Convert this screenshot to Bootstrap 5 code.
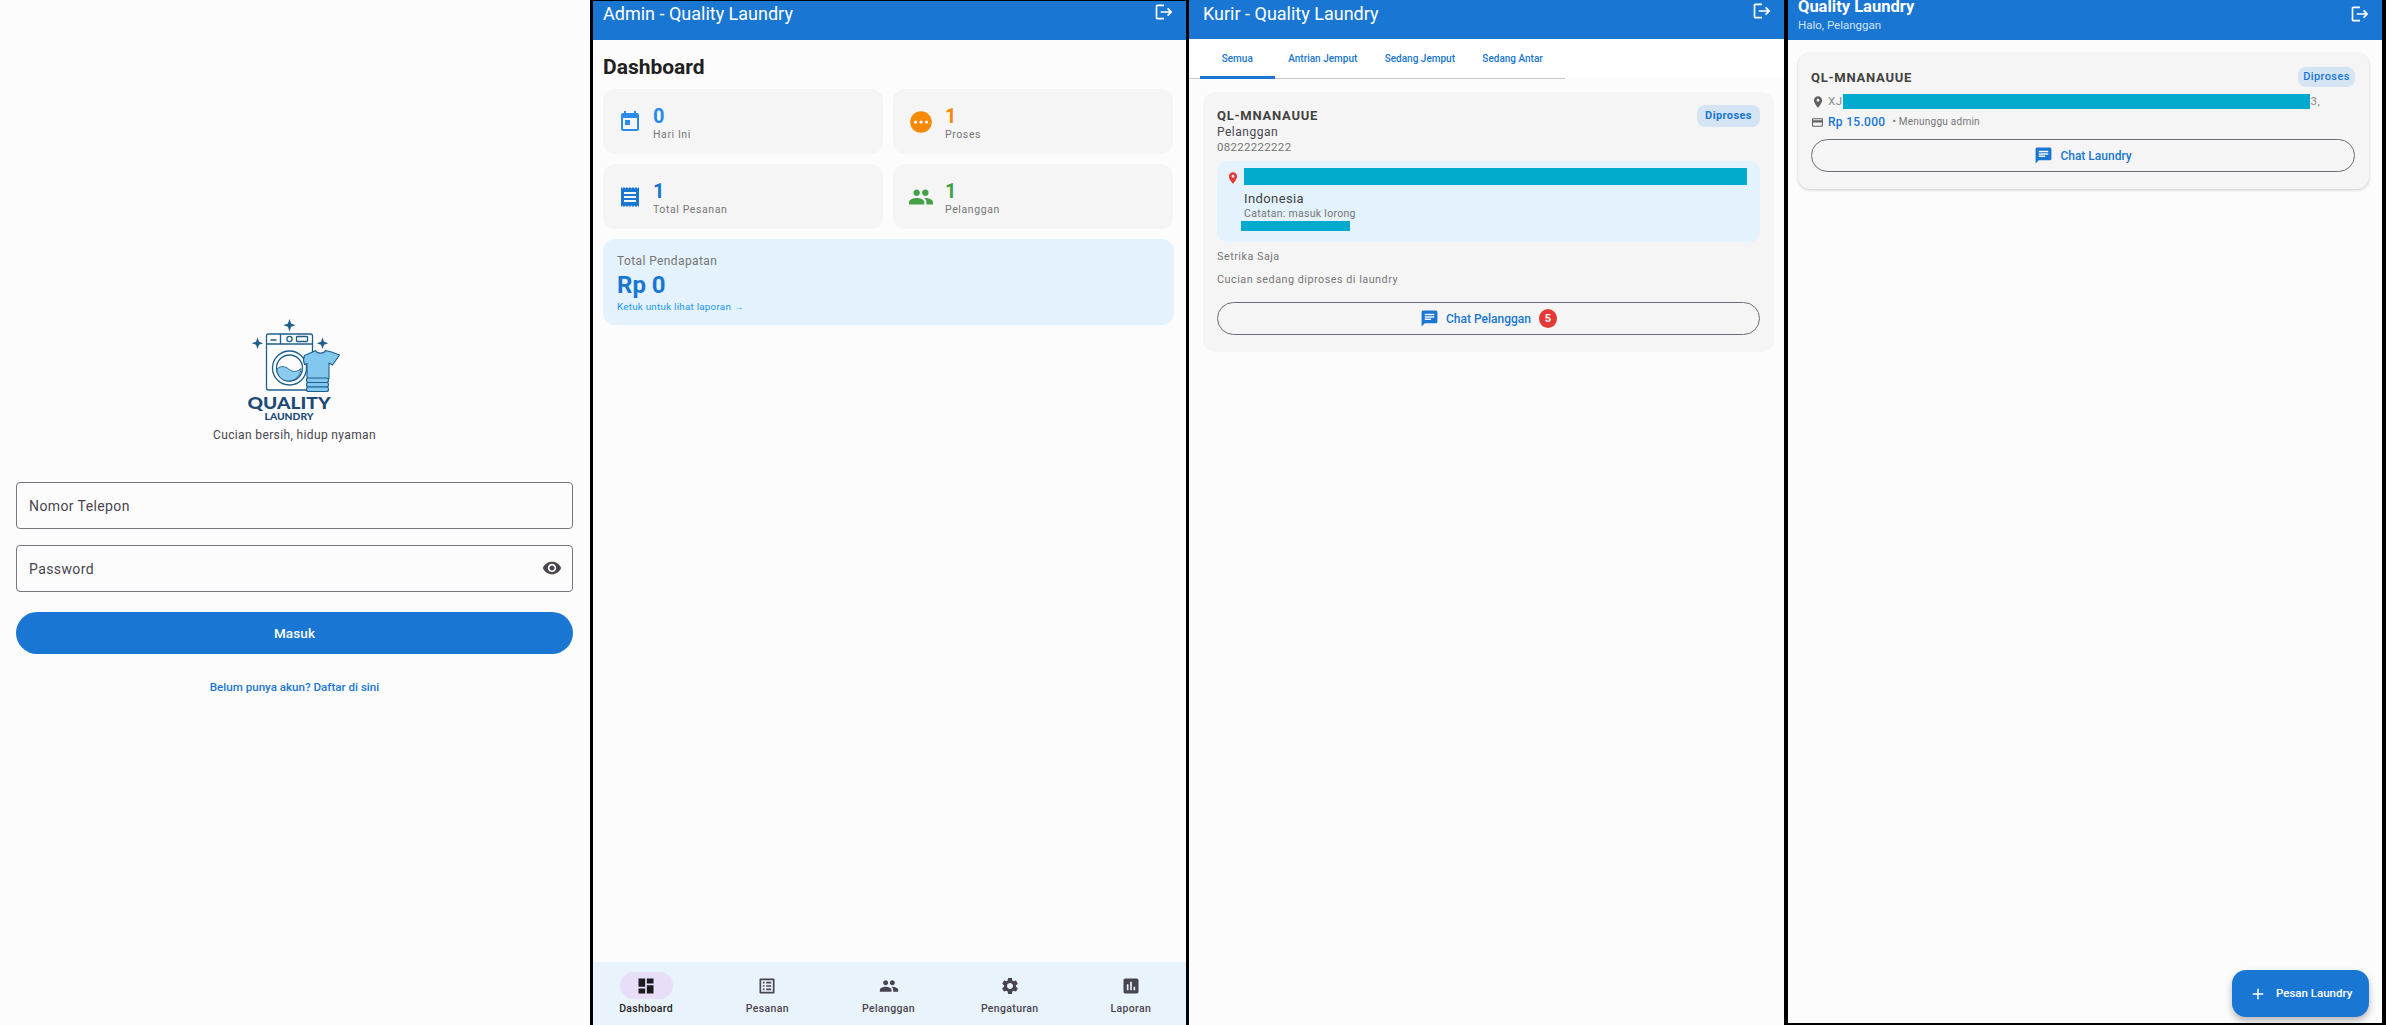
<!DOCTYPE html>
<html lang="en">
<head>
  <meta charset="UTF-8">
  <meta name="viewport" content="width=device-width, initial-scale=1.0">
  <title>Quality Laundry</title>
  <link href="https://cdn.jsdelivr.net/npm/bootstrap@5.3.0/dist/css/bootstrap.min.css" rel="stylesheet">
  <style>
    html, body { height: 100%; overflow: hidden; }
    body { font-family: Roboto, "Liberation Sans", sans-serif; background: #000; color: #212121; }
    svg.ic { fill: currentColor; flex: none; display: block; }

    /* four phone screens side by side */
    .shell { height: 1025px; background: #000; gap: 3px; }
    .screen { background: #fcfcfc; position: relative; overflow: hidden; flex: none; display: flex; flex-direction: column; }
    .scr-login { width: 590px; padding: 318px 17px 0 16px; }
    .scr-admin { width: 593px; margin-top: 1px; height: 1024px; }
    .scr-kurir { width: 595px; margin-right: 1px; }
    .scr-user { width: 594px; height: 1023px; }

    /* login */
    .logo-wrap { width: 100px; margin: 0 auto; transform: translateX(-1.5px); }
    .logo-wrap svg { display: block; }
    .logo-word { font-family: Lato, sans-serif; font-weight: 900; fill: #1d4a76; }
    .tagline { font-size: 12px; letter-spacing: .37px; color: #49454f; text-align: center; line-height: 16px; margin-top: 5px; margin-bottom: 39px; }
    .login-input.form-control { height: 47px; border: 1px solid #79747e; border-radius: 4px; background: transparent; padding: 0 12px; font-size: 14px; letter-spacing: .4px; margin-bottom: 16px; box-shadow: none; }
    .login-input::placeholder { color: #49454f; opacity: 1; }
    .eye-btn { position: absolute; right: 11px; top: 13px; color: #49454f; }
    .btn-masuk.btn { display: block; width: 100%; height: 42px; margin-top: 20px; background: #1976d2; border: 0; color: #fff; font-size: 13.5px; font-weight: 500; letter-spacing: .1px; }
    .daftar-link { display: block; text-align: center; margin-top: 25px; font-size: 11.6px; font-weight: 500; color: #1976d2; text-decoration: none; line-height: 16px; }

    /* app bars */
    .appbar { background: #1976d2; color: #fff; height: 39px; padding: 0 12px 0 10px; flex: none; }
    .appbar-title { font-size: 18px; line-height: 24px; margin-top: 1px; }
    .scr-kurir .appbar { padding-left: 14px; }
    .scr-kurir .appbar-title { margin-top: 2px; }
    .scr-kurir .appbar svg, .scr-admin .appbar svg { margin-top: 1px; }
    .scr-user .appbar { height: 40px; padding-left: 10px; padding-right: 12px; align-items: stretch; overflow: hidden; }
    .user-bar-text { display: flex; flex-direction: column; justify-content: flex-end; padding-bottom: 8px; }
    .user-title { font-size: 16.5px; font-weight: 700; line-height: 20px; }
    .user-sub { font-size: 11.5px; line-height: 14px; color: #cfe3f6; margin-top: 1px; }

    /* admin */
    .admin-body { padding: 0 12px 0 10px; flex: 1; }
    .dash-title { font-size: 21px; font-weight: 700; line-height: 28px; margin: 13px 0 8px; color: #212121; }
    .stat-grid { display: grid; grid-template-columns: 280px 280px; gap: 10px; }
    .stat-box { height: 65px; background: #f5f5f5; border-radius: 12px; padding-left: 15px; display: flex; align-items: center; gap: 11px; }
    .stat-text { padding-top: 3px; }
    .stat-num { font-size: 20px; font-weight: 700; line-height: 24px; }
    .stat-lbl { font-size: 10.5px; letter-spacing: .6px; color: #757575; line-height: 14px; }
    .c-today { color: #2a8ce8; }
    .c-proses { color: #f58a07; }
    .c-total { color: #1976d2; }
    .c-cust { color: #43a047; }
    .income-box { background: #e3f2fd; border-radius: 12px; height: 86px; margin-top: 10px; padding: 14px 14px; }
    .income-lbl { font-size: 12px; letter-spacing: .4px; color: #757575; line-height: 16px; }
    .income-val { font-size: 24px; font-weight: 700; color: #1976d2; line-height: 30px; margin-top: 1px; }
    .income-hint { font-size: 9.8px; letter-spacing: .25px; color: #2196f3; line-height: 14px; }

    .bottom-bar { height: 63px; background: #e9f3fc; gap: 21.200px; flex: none; padding-right: 2px; }
    .bar-item { width: 100px; display: flex; flex-direction: column; align-items: center; color: #49454f; padding-top: 10px; }
    .bar-pill { width: 53px; height: 27px; border-radius: 14px; display: flex; align-items: center; justify-content: center; }
    .bar-item.is-on { color: #1d1b20; }
    .bar-item.is-on .bar-pill { background: #e8def8; }
    .bar-lbl { font-size: 10.5px; font-weight: 500; letter-spacing: .35px; line-height: 14px; margin-top: 3px; }

    /* kurir */
    .tab-band { background: #fff; height: 40px; flex: none; }
    .tab-strip { width: 376px; height: 40px; border-bottom: 1px solid #cac4d0; padding-left: 11px; flex-wrap: nowrap; }
    .tab-strip .nav-link { height: 40px; padding: 0 13.7px; font-size: 10px; font-weight: 500; color: #1976d2; line-height: 40px; white-space: nowrap; margin-bottom: -1px; border-bottom: 3px solid transparent; }
    .tab-strip .nav-link.active { min-width: 74.5px; text-align: center; border-bottom-color: #1976d2; }
    .order-box { background: #f5f5f5; border: 0; border-radius: 12px; }
    .kurir-order { margin: 13px 10px 0 14px; height: 260px; padding: 13px 14px 0; }
    .user-order { margin: 13px 13px 0 10px; height: 136px; padding: 14px 14px 0 13px; box-shadow: 0 1px 3px rgba(0,0,0,.2); }
    .order-code { font-size: 13px; font-weight: 700; letter-spacing: .75px; color: #424242; line-height: 20px; }
    .user-order .order-code { padding-top: 1px; }
    .status-chip.badge { background: #d5e4f3; color: #1976d2; font-size: 11px; font-weight: 700; letter-spacing: .4px; border-radius: 8px; padding: 0; height: 22px; width: 63px; line-height: 22px; }
    .user-order .status-chip.badge { width: 57px; height: 20px; line-height: 20px; font-weight: 500; }
    .cust-name { font-size: 12px; letter-spacing: .5px; color: #49454f; line-height: 16px; margin-top: -3px; }
    .cust-phone { font-size: 11.5px; letter-spacing: .3px; color: #757575; line-height: 15px; }
    .addr-box { background: #e3f2fd; border-radius: 10px; height: 81px; margin-top: 6px; padding: 7px 13px 0 9px; display: flex; gap: 4px; }
    .addr-pin { color: #e53935; margin-top: 3px; }
    .addr-text { flex: 1; min-width: 0; }
    .hidden-bar { background: #02abce; display: block; }
    .bar-a { height: 17px; width: 503px; }
    .addr-country { font-size: 13px; letter-spacing: .4px; color: #424242; line-height: 16px; margin-top: 6px; }
    .addr-note { font-size: 10.5px; letter-spacing: .3px; color: #757575; line-height: 14px; }
    .bar-b { height: 10px; width: 109px; margin-left: -3px; }
    .small-line { font-size: 10.8px; letter-spacing: .5px; color: #757575; line-height: 14px; }
    .line-setrika { margin-top: 8px; }
    .line-status { margin-top: 9px; }
    .chat-btn.btn { display: flex; align-items: center; justify-content: center; gap: 7px; height: 33px; width: 100%; padding: 0; border: 1px solid #6f6b75; background: transparent; color: #1976d2; font-size: 12px; font-weight: 500; }
    .kurir-order .chat-btn.btn { margin-top: 15px; }
    .unread-dot { width: 18px; height: 19px; border-radius: 50%; background: #e53935; color: #fff; font-size: 11px; font-weight: 700; line-height: 19px; text-align: center; margin-left: 1px; }

    /* pelanggan */
    .addr-line { font-size: 11.5px; letter-spacing: .5px; color: #8a8a8a; line-height: 15px; height: 15px; margin-top: 6px; }
    .user-pin { color: #616161; margin: 0 3.500px 0 -.5px; }
    .pay-icon { color: #616161; margin-right: 4px; }
    .bar-c { width: 467px; height: 15px; margin: 0 1px 0 0; }
    .price-line { line-height: 16px; margin-top: 5px; }
    .price-val { font-size: 12px; font-weight: 500; letter-spacing: .3px; color: #1976d2; }
    .price-note { font-size: 10px; letter-spacing: .25px; color: #757575; margin-left: 7px; }
    .user-order .chat-btn.btn { margin-top: 9px; }
    .fab-pesan.btn { position: absolute; left: 444px; top: 970px; width: 137px; height: 47px; border: 0; border-radius: 14px; background: #1976d2; color: #fff; font-size: 11.5px; font-weight: 500; padding: 0 0 0 17px; display: flex; align-items: center; gap: 9px; white-space: nowrap; box-shadow: 0 4px 7px rgba(0,0,0,.28); }
  </style>
</head>
<body>
  <!-- icon sheet -->
  <svg width="0" height="0" class="position-absolute">
    <symbol id="i-logout" viewBox="0 0 24 24"><path d="M17 7l-1.41 1.41L18.17 11H8v2h10.17l-2.58 2.58L17 17l5-5zM4 5h8V3H4c-1.1 0-2 .9-2 2v14c0 1.1.9 2 2 2h8v-2H4V5z"/></symbol>
    <symbol id="i-eye" viewBox="0 0 24 24"><path d="M12 4.5C7 4.5 2.73 7.61 1 12c1.73 4.39 6 7.5 11 7.5s9.27-3.11 11-7.5c-1.73-4.39-6-7.5-11-7.5zM12 17c-2.76 0-5-2.24-5-5s2.24-5 5-5 5 2.24 5 5-2.24 5-5 5zm0-8c-1.66 0-3 1.34-3 3s1.34 3 3 3 3-1.34 3-3-1.34-3-3-3z"/></symbol>
    <symbol id="i-today" viewBox="0 0 24 24"><path d="M19 3h-1V1h-2v2H8V1H6v2H5c-1.11 0-1.99.9-1.99 2L3 19c0 1.1.89 2 2 2h14c1.1 0 2-.9 2-2V5c0-1.1-.9-2-2-2zm0 16H5V8h14v11zM7 10h5v5H7z"/></symbol>
    <symbol id="i-pending" viewBox="0 0 24 24"><path d="M12 2C6.48 2 2 6.48 2 12s4.48 10 10 10 10-4.48 10-10S17.52 2 12 2zM7 13.5c-.83 0-1.5-.67-1.5-1.5s.67-1.5 1.5-1.5 1.5.67 1.5 1.5-.67 1.5-1.5 1.5zm5 0c-.83 0-1.5-.67-1.5-1.5s.67-1.5 1.5-1.5 1.5.67 1.5 1.5-.67 1.5-1.5 1.5zm5 0c-.83 0-1.5-.67-1.5-1.5s.67-1.5 1.5-1.5 1.5.67 1.5 1.5-.67 1.5-1.5 1.5z"/></symbol>
    <symbol id="i-receipt" viewBox="0 0 24 24"><path d="M18 17H6v-2h12v2zm0-4H6v-2h12v2zm0-4H6V7h12v2zM3 22l1.5-1.5L6 22l1.5-1.5L9 22l1.5-1.5L12 22l1.5-1.5L15 22l1.5-1.5L18 22l1.5-1.5L21 22V2l-1.5 1.5L18 2l-1.5 1.5L15 2l-1.5 1.5L12 2l-1.5 1.5L9 2 7.5 3.5 6 2 4.5 3.5 3 2v20z"/></symbol>
    <symbol id="i-people" viewBox="0 0 24 24"><path d="M16 11c1.66 0 2.99-1.34 2.99-3S17.66 5 16 5c-1.66 0-3 1.34-3 3s1.34 3 3 3zm-8 0c1.66 0 2.99-1.34 2.99-3S9.66 5 8 5C6.34 5 5 6.34 5 8s1.34 3 3 3zm0 2c-2.33 0-7 1.17-7 3.5V19h14v-2.5c0-2.33-4.67-3.5-7-3.5zm8 0c-.29 0-.62.02-.97.05 1.16.84 1.97 1.97 1.97 3.45V19h6v-2.5c0-2.33-4.67-3.5-7-3.5z"/></symbol>
    <symbol id="i-dash" viewBox="0 0 24 24"><path d="M3 13h8V3H3v10zm0 8h8v-6H3v6zm10 0h8V11h-8v10zm0-18v6h8V3h-8z"/></symbol>
    <symbol id="i-list" viewBox="0 0 24 24"><path d="M19 5v14H5V5h14m1.1-2H3.9c-.5 0-.9.4-.9.9v16.2c0 .4.4.9.9.9h16.2c.4 0 .9-.5.9-.9V3.9c0-.5-.5-.9-.9-.9zM11 7h6v2h-6V7zm0 4h6v2h-6v-2zm0 4h6v2h-6zM7 7h2v2H7zm0 4h2v2H7zm0 4h2v2H7z"/></symbol>
    <symbol id="i-gear" viewBox="0 0 24 24"><path d="M19.14 12.94c.04-.3.06-.61.06-.94 0-.32-.02-.64-.07-.94l2.03-1.58c.18-.14.23-.41.12-.61l-1.92-3.32c-.12-.22-.37-.29-.59-.22l-2.39.96c-.5-.38-1.03-.7-1.62-.94l-.36-2.54c-.04-.24-.24-.41-.48-.41h-3.84c-.24 0-.43.17-.47.41l-.36 2.54c-.59.24-1.13.57-1.62.94l-2.39-.96c-.22-.08-.47 0-.59.22L2.74 8.87c-.12.21-.08.47.12.61l2.03 1.58c-.05.3-.09.63-.09.94s.02.64.07.94l-2.03 1.58c-.18.14-.23.41-.12.61l1.92 3.32c.12.22.37.29.59.22l2.39-.96c.5.38 1.03.7 1.62.94l.36 2.54c.05.24.24.41.48.41h3.84c.24 0 .44-.17.47-.41l.36-2.54c.59-.24 1.13-.56 1.62-.94l2.39.96c.22.08.47 0 .59-.22l1.92-3.32c.12-.22.07-.47-.12-.61l-2.01-1.58zM12 15.6c-1.98 0-3.6-1.62-3.6-3.6s1.62-3.6 3.6-3.6 3.6 1.62 3.6 3.6-1.62 3.6-3.6 3.6z"/></symbol>
    <symbol id="i-report" viewBox="0 0 24 24"><path d="M19 3H5c-1.1 0-2 .9-2 2v14c0 1.1.9 2 2 2h14c1.1 0 2-.9 2-2V5c0-1.1-.9-2-2-2zM9 17H7v-7h2v7zm4 0h-2V7h2v10zm4 0h-2v-4h2v4z"/></symbol>
    <symbol id="i-chat" viewBox="0 0 24 24"><path d="M20 2H4c-1.1 0-1.99.9-1.99 2L2 22l4-4h14c1.1 0 2-.9 2-2V4c0-1.1-.9-2-2-2zM6 9h12v2H6V9zm8 5H6v-2h8v2zm4-6H6V6h12v2z"/></symbol>
    <symbol id="i-pin" viewBox="0 0 24 24"><path d="M12 2C8.13 2 5 5.13 5 9c0 5.25 7 13 7 13s7-7.75 7-13c0-3.87-3.13-7-7-7zm0 9.5c-1.38 0-2.5-1.12-2.5-2.5s1.12-2.5 2.5-2.5 2.5 1.12 2.5 2.5-1.12 2.5-2.5 2.5z"/></symbol>
    <symbol id="i-pay" viewBox="0 0 24 24"><path d="M20 4H4c-1.11 0-1.99.89-1.99 2L2 18c0 1.11.89 2 2 2h16c1.11 0 2-.89 2-2V6c0-1.11-.89-2-2-2zm0 14H4v-6h16v6zm0-10H4V6h16v2z"/></symbol>
    <symbol id="i-add" viewBox="0 0 24 24"><path d="M19 13h-6v6h-2v-6H5v-2h6V5h2v6h6v2z"/></symbol>
  </svg>

  <div class="shell d-flex">

    <!-- Login -->
    <section class="screen scr-login">
      <div class="logo-wrap">
        <svg width="100" height="104" viewBox="0 0 100 104">
          <g fill="#1f5f8b">
            <path d="M46 1l1.6 4.6L52 7.2l-4.4 1.6L46 13.5l-1.6-4.7L40 7.2l4.4-1.6z"/>
            <path d="M14 19.500l1.500 4.200 4.200 1.500-4.200 1.500-1.500 4.300-1.500-4.300-4.200-1.500 4.200-1.500z"/>
            <path d="M79 19.500l1.500 4.200 4.200 1.500-4.200 1.500-1.500 4.300-1.500-4.300-4.200-1.500 4.200-1.500z"/>
          </g>
          <g fill="none" stroke="#1f5f8b" stroke-width="1.300">
            <rect x="23" y="16" width="46" height="56" rx="2" fill="#fcfcfc"/>
            <path d="M23 26h46M37 16v10"/>
            <circle cx="46" cy="21" r="2.600"/>
            <rect x="53" y="18.500" width="11" height="5" rx=".8"/>
            <path d="M27 22h6" stroke-width="1.600"/>
            <circle cx="46" cy="50" r="17" fill="#fcfcfc"/>
            <circle cx="46" cy="50" r="13"/>
          </g>
          <path d="M33.400 51c4-3.500 8-3 12 .2s8 3 12.100-.6c-.4 7-5.700 12.400-12.500 12.400-6.500 0-11.500-5.200-11.600-12z" fill="#8ccaef" stroke="#1f5f8b" stroke-width=".9"/>
          <path d="M69 34l-8 3.500c-1.300 3-1.300 6 0 9l2.500-1v15h22V45l3.500 2 7-10-8-3-6-1.500c-1.500 3.500-8.500 3.500-10 0z" fill="#82c7ee" stroke="#1f5f8b" stroke-width="1.100" stroke-linejoin="round"/>
          <g fill="#82c7ee" stroke="#1f5f8b" stroke-width="1.100">
            <rect x="63" y="60" width="22" height="4.500" rx="2"/>
            <rect x="63" y="64.500" width="22" height="4.500" rx="2"/>
            <rect x="63" y="69" width="22" height="4.500" rx="2"/>
          </g>
          <text class="logo-word" x="45.500" y="90.500" text-anchor="middle" font-size="16.500" textLength="83" lengthAdjust="spacingAndGlyphs">QUALITY</text>
          <text class="logo-word" x="45.500" y="101.500" text-anchor="middle" font-size="8.500" textLength="49" lengthAdjust="spacingAndGlyphs">LAUNDRY</text>
        </svg>
      </div>
      <p class="tagline">Cucian bersih, hidup nyaman</p>
      <form>
        <input type="text" class="form-control login-input" placeholder="Nomor Telepon">
        <div class="position-relative">
          <input type="password" class="form-control login-input" placeholder="Password">
          <svg class="ic eye-btn" width="20" height="20"><use href="#i-eye"/></svg>
        </div>
        <button type="button" class="btn btn-masuk rounded-pill">Masuk</button>
      </form>
      <a href="#" class="daftar-link">Belum punya akun? Daftar di sini</a>
    </section>

    <!-- Admin -->
    <section class="screen scr-admin">
      <header class="appbar d-flex justify-content-between align-items-start">
        <div class="appbar-title">Admin - Quality Laundry</div>
        <svg class="ic" width="20" height="20"><use href="#i-logout"/></svg>
      </header>
      <main class="admin-body">
        <h1 class="dash-title">Dashboard</h1>
        <div class="stat-grid">
          <div class="stat-box">
            <svg class="ic c-today" width="24" height="24"><use href="#i-today"/></svg>
            <div class="stat-text"><div class="stat-num c-today">0</div><div class="stat-lbl">Hari Ini</div></div>
          </div>
          <div class="stat-box">
            <svg class="ic c-proses" width="26" height="26"><use href="#i-pending"/></svg>
            <div class="stat-text"><div class="stat-num c-proses">1</div><div class="stat-lbl">Proses</div></div>
          </div>
          <div class="stat-box">
            <svg class="ic c-total" width="24" height="24"><use href="#i-receipt"/></svg>
            <div class="stat-text"><div class="stat-num c-total">1</div><div class="stat-lbl">Total Pesanan</div></div>
          </div>
          <div class="stat-box">
            <svg class="ic c-cust" width="26" height="26"><use href="#i-people"/></svg>
            <div class="stat-text"><div class="stat-num c-cust">1</div><div class="stat-lbl">Pelanggan</div></div>
          </div>
        </div>
        <div class="income-box">
          <div class="income-lbl">Total Pendapatan</div>
          <div class="income-val">Rp 0</div>
          <div class="income-hint">Ketuk untuk lihat laporan →</div>
        </div>
      </main>
      <nav class="bottom-bar d-flex justify-content-center">
        <div class="bar-item is-on"><span class="bar-pill"><svg class="ic" width="20" height="20"><use href="#i-dash"/></svg></span><span class="bar-lbl">Dashboard</span></div>
        <div class="bar-item"><span class="bar-pill"><svg class="ic" width="20" height="20"><use href="#i-list"/></svg></span><span class="bar-lbl">Pesanan</span></div>
        <div class="bar-item"><span class="bar-pill"><svg class="ic" width="20" height="20"><use href="#i-people"/></svg></span><span class="bar-lbl">Pelanggan</span></div>
        <div class="bar-item"><span class="bar-pill"><svg class="ic" width="20" height="20"><use href="#i-gear"/></svg></span><span class="bar-lbl">Pengaturan</span></div>
        <div class="bar-item"><span class="bar-pill"><svg class="ic" width="20" height="20"><use href="#i-report"/></svg></span><span class="bar-lbl">Laporan</span></div>
      </nav>
    </section>

    <!-- Kurir -->
    <section class="screen scr-kurir">
      <header class="appbar d-flex justify-content-between align-items-start">
        <div class="appbar-title">Kurir - Quality Laundry</div>
        <svg class="ic" width="20" height="20"><use href="#i-logout"/></svg>
      </header>
      <div class="tab-band">
        <ul class="nav tab-strip">
          <li class="nav-item"><a class="nav-link active" href="#">Semua</a></li>
          <li class="nav-item"><a class="nav-link" href="#">Antrian Jemput</a></li>
          <li class="nav-item"><a class="nav-link" href="#">Sedang Jemput</a></li>
          <li class="nav-item"><a class="nav-link" href="#">Sedang Antar</a></li>
        </ul>
      </div>
      <div class="order-box kurir-order">
        <div class="d-flex justify-content-between align-items-center">
          <div class="order-code">QL-MNANAUUE</div>
          <span class="badge status-chip">Diproses</span>
        </div>
        <div class="cust-name">Pelanggan</div>
        <div class="cust-phone">08222222222</div>
        <div class="addr-box">
          <svg class="ic addr-pin" width="14" height="14"><use href="#i-pin"/></svg>
          <div class="addr-text">
            <span class="hidden-bar bar-a"></span>
            <div class="addr-country">Indonesia</div>
            <div class="addr-note">Catatan: masuk lorong</div>
            <span class="hidden-bar bar-b"></span>
          </div>
        </div>
        <div class="small-line line-setrika">Setrika Saja</div>
        <div class="small-line line-status">Cucian sedang diproses di laundry</div>
        <button type="button" class="btn chat-btn rounded-pill">
          <svg class="ic" width="19" height="19"><use href="#i-chat"/></svg>Chat Pelanggan<span class="unread-dot">5</span>
        </button>
      </div>
    </section>

    <!-- Pelanggan -->
    <section class="screen scr-user">
      <header class="appbar d-flex justify-content-between">
        <div class="user-bar-text">
          <div class="user-title">Quality Laundry</div>
          <div class="user-sub">Halo, Pelanggan</div>
        </div>
        <svg class="ic mt-1" width="20" height="20"><use href="#i-logout"/></svg>
      </header>
      <div class="order-box user-order">
        <div class="d-flex justify-content-between align-items-start">
          <div class="order-code">QL-MNANAUUE</div>
          <span class="badge status-chip">Diproses</span>
        </div>
        <div class="addr-line d-flex align-items-center">
          <svg class="ic user-pin" width="14" height="14"><use href="#i-pin"/></svg><span>XJ</span><span class="hidden-bar bar-c"></span><span>3,</span>
        </div>
        <div class="price-line d-flex align-items-center">
          <svg class="ic pay-icon" width="13" height="13"><use href="#i-pay"/></svg>
          <span class="price-val">Rp 15.000</span><span class="price-note">• Menunggu admin</span>
        </div>
        <button type="button" class="btn chat-btn rounded-pill">
          <svg class="ic" width="19" height="19"><use href="#i-chat"/></svg>Chat Laundry
        </button>
      </div>
      <button type="button" class="btn fab-pesan">
        <svg class="ic" width="18" height="18"><use href="#i-add"/></svg>Pesan Laundry
      </button>
    </section>

  </div>

  <script src="https://cdn.jsdelivr.net/npm/bootstrap@5.3.0/dist/js/bootstrap.bundle.min.js"></script>
</body>
</html>
